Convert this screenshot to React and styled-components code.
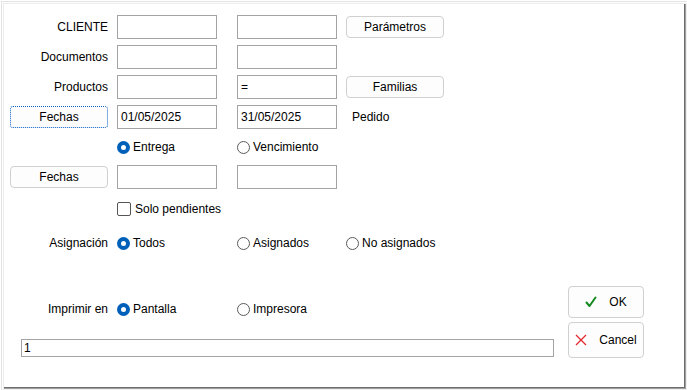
import React from 'react';
import styled, { createGlobalStyle, css } from 'styled-components';

const GlobalStyle = createGlobalStyle`
  html, body {
    margin: 0;
    padding: 0;
    background: #fff;
  }
  body {
    font-family: "Liberation Sans", Arial, sans-serif;
    font-size: 12px;
    color: #000;
  }
`;

const Window = styled.div`
  width: 687px;
  height: 390px;
  box-sizing: border-box;
  padding: 15px 0 0 10px;
  background: #fff;
  display: flex;
  flex-direction: column;
  box-shadow:
    inset 1px 1px 0 #fff,
    inset 2px 2px 0 #e3e3e3,
    inset 3px 3px 0 #fff,
    inset 4px 4px 0 #ececec,
    inset -1px -1px 0 #f0f0f0,
    inset -2px -2px 0 #a0a0a0,
    inset -3px -3px 0 #6d6d6d;
`;

const Row = styled.div`
  display: grid;
  grid-template-columns: 107px 120px 109px 98px;
  height: 24px;
  align-items: center;
  margin-top: ${({ $mt }) => ($mt === undefined ? 6 : $mt)}px;
`;

const Label = styled.span`
  justify-self: end;
  padding-right: 9px;
  white-space: nowrap;
`;

const Note = styled.span`
  padding-left: 6px;
`;

const Spacer = styled.span``;

const Field = styled.input`
  width: 100px;
  height: 24px;
  box-sizing: border-box;
  border: 1px solid #a3a3a3;
  padding: 0 3px;
  margin: 0;
  font: inherit;
  color: #000;
  background: #fff;
  outline: none;
`;

const Button = styled.button`
  width: 98px;
  height: 22px;
  box-sizing: border-box;
  border: 1px solid #d0d0d0;
  border-radius: 4px;
  background: #fdfdfd;
  font: inherit;
  color: #000;
  padding: 0;
  margin: 0;
  ${({ $focused }) =>
    $focused &&
    css`
      border: 1px dotted #0a5fc4;
      border-radius: 3px;
    `}
`;

const Option = styled.label`
  display: flex;
  align-items: center;
  gap: 3px;
  white-space: nowrap;
`;

const RadioDot = styled.span`
  width: 13px;
  height: 13px;
  box-sizing: border-box;
  border-radius: 50%;
  flex-shrink: 0;
  position: relative;
  ${({ $on }) =>
    $on
      ? css`
          background: #005fb8;
          &::after {
            content: '';
            position: absolute;
            left: 4px;
            top: 4px;
            width: 5px;
            height: 5px;
            border-radius: 50%;
            background: #fff;
          }
        `
      : css`
          background: #fff;
          border: 1px solid #5a5a5a;
        `}
`;

const CheckBox = styled.span`
  width: 14px;
  height: 14px;
  box-sizing: border-box;
  border: 1.5px solid #555;
  border-radius: 2px;
  background: #fff;
  flex-shrink: 0;
  margin-right: 1px;
`;

const Bottom = styled.div`
  display: flex;
  gap: 14px;
  margin-top: 31px;
`;

const BottomLeft = styled.div`
  width: 544px;
  display: flex;
  flex-direction: column;
`;

const LongField = styled(Field)`
  width: 533px;
  height: 18px;
  padding: 0 2px;
  margin: 18px 0 0 11px;
`;

const Actions = styled.div`
  display: flex;
  flex-direction: column;
  gap: 4px;
`;

const ActionButton = styled.button`
  width: 76px;
  height: ${({ $h }) => $h}px;
  box-sizing: border-box;
  border: 1px solid #d0d0d0;
  border-radius: 4px;
  background: #fdfdfd;
  font: inherit;
  color: #000;
  padding: 0;
  margin: 0;
  display: flex;
  align-items: center;
  justify-content: center;
  gap: 12px;
`;

function Radio({ on, children }) {
  return (
    <Option>
      <RadioDot $on={on} />
      {children}
    </Option>
  );
}

const CheckIcon = () => (
  <svg width="12" height="12" viewBox="0 0 12 12">
    <path d="M1.5 6.5 L4.5 10 L10.5 1.5" fill="none" stroke="#14891e" strokeWidth="2" strokeLinecap="round" strokeLinejoin="round" />
  </svg>
);

const CrossIcon = () => (
  <svg width="12" height="12" viewBox="0 0 12 12">
    <path d="M1 1 L11 11 M11 1 L1 11" fill="none" stroke="#e0282e" strokeWidth="1.3" />
  </svg>
);

export default function App() {
  return (
    <>
      <GlobalStyle />
      <Window>
        <Row $mt={0}>
          <Label>CLIENTE</Label>
          <Field defaultValue="" />
          <Field defaultValue="" />
          <Button>Parámetros</Button>
        </Row>
        <Row>
          <Label>Documentos</Label>
          <Field defaultValue="" />
          <Field defaultValue="" />
        </Row>
        <Row>
          <Label>Productos</Label>
          <Field defaultValue="" />
          <Field defaultValue="=" />
          <Button>Familias</Button>
        </Row>
        <Row>
          <Button $focused>Fechas</Button>
          <Field defaultValue="01/05/2025" />
          <Field defaultValue="31/05/2025" />
          <Note>Pedido</Note>
        </Row>
        <Row>
          <Spacer />
          <Radio on>Entrega</Radio>
          <Radio>Vencimiento</Radio>
        </Row>
        <Row>
          <Button>Fechas</Button>
          <Field defaultValue="" />
          <Field defaultValue="" />
        </Row>
        <Row $mt={8}>
          <Spacer />
          <Option>
            <CheckBox />
            Solo pendientes
          </Option>
        </Row>
        <Row $mt={10}>
          <Label>Asignación</Label>
          <Radio on>Todos</Radio>
          <Radio>Asignados</Radio>
          <Radio>No asignados</Radio>
        </Row>
        <Bottom>
          <BottomLeft>
            <Row $mt={11}>
              <Label>Imprimir en</Label>
              <Radio on>Pantalla</Radio>
              <Radio>Impresora</Radio>
            </Row>
            <LongField defaultValue="1" />
          </BottomLeft>
          <Actions>
            <ActionButton $h={32}>
              <CheckIcon />
              OK
            </ActionButton>
            <ActionButton $h={36}>
              <CrossIcon />
              Cancel
            </ActionButton>
          </Actions>
        </Bottom>
      </Window>
    </>
  );
}
